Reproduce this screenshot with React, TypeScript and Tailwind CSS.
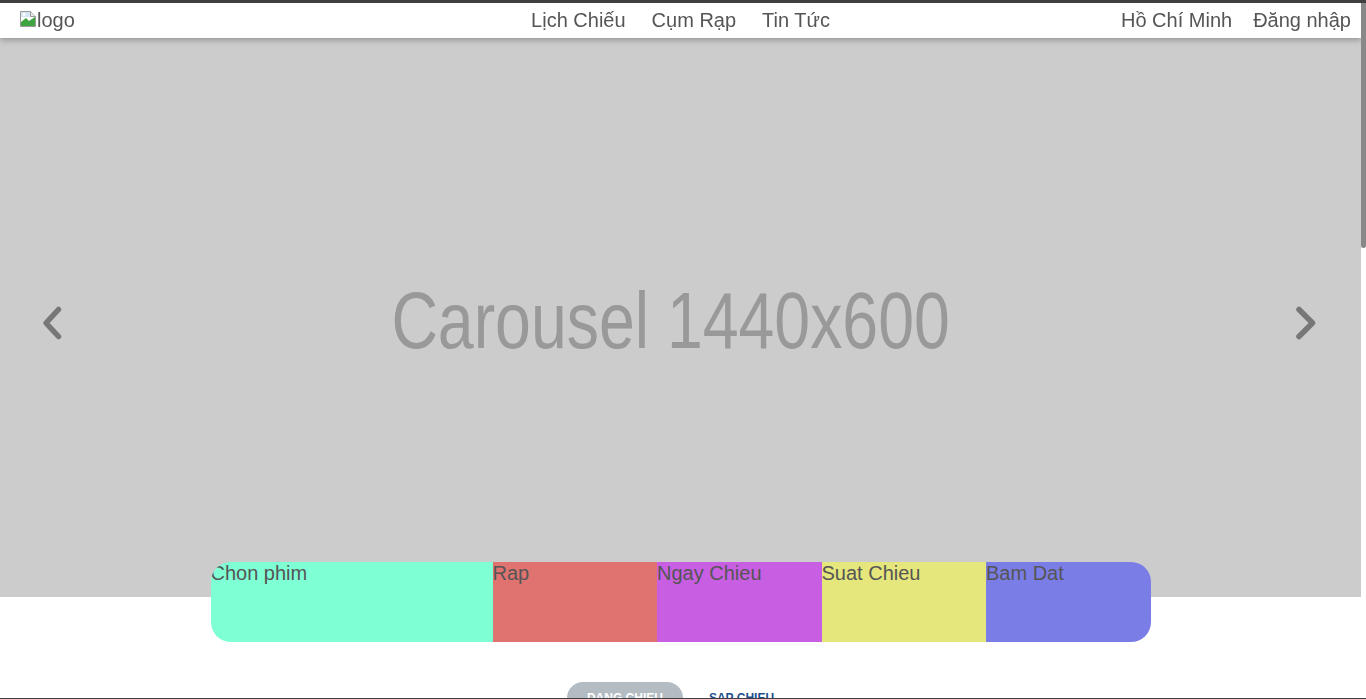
import React from "react";

const steps = [
  { label: "Chon phim", cls: "w-[30%] bg-[#7fffd4]" },
  { label: "Rap", cls: "flex-1 bg-[#e07370]" },
  { label: "Ngay Chieu", cls: "flex-1 bg-[#c85fe3]" },
  { label: "Suat Chieu", cls: "flex-1 bg-[#e5e67b]" },
  { label: "Bam Dat", cls: "flex-1 bg-[#7b7de6]" },
];

function BrokenImage() {
  return (
    <svg width="16" height="16" viewBox="0 0 16 16" className="-mt-[3px] shrink-0">
      <path d="M0.5 0.5h10l5 5v10H0.5z" fill="#fff" stroke="#999" />
      <path d="M10.5 0.5v5h5" fill="#e8e8e8" stroke="#999" />
      <path d="M1 1h9v5H1z" fill="#d6e6f5" />
      <circle cx="4" cy="3.5" r="1.4" fill="#fff" />
      <path d="M1 15V11l5-4 3 3 6-4v9z" fill="#3fa33f" />
    </svg>
  );
}

function Chevron({ dir }: { dir: "left" | "right" }) {
  const d = dir === "left" ? "M20.5 9.5L8 23l12.5 13.5" : "M9 9.5L22.5 23 9 36.5";
  return (
    <svg width="30" height="46" viewBox="0 0 30 46" fill="none">
      <path d={d} stroke="#777" strokeWidth={5.5} strokeLinecap="round" strokeLinejoin="round" />
    </svg>
  );
}

export default function App() {
  return (
    <div className="flex h-screen flex-col border-t-[3px] border-b border-[#404040] bg-white font-['Liberation_Sans',Arial,sans-serif] text-[#555]">
      <div className="flex min-h-0 flex-1">
        <div className="min-w-0 flex-1 overflow-hidden">
          {/* Header */}
          <header className="sticky top-0 z-20 grid h-[35px] grid-cols-[1fr_auto_1fr] items-center bg-white text-[20px] leading-[23px] shadow-[0_2px_6px_rgba(0,0,0,0.28)]">
            <div className="flex items-center pl-5">
              <BrokenImage />
              <span className="ml-px">logo</span>
            </div>
            <nav className="flex items-center">
              <a className="px-[13px]">Lịch Chiếu</a>
              <a className="px-[13px]">Cụm Rạp</a>
              <a className="px-[13px]">Tin Tức</a>
            </nav>
            <div className="flex items-center justify-end gap-[21px] pr-[10px]">
              <span>Hồ Chí Minh</span>
              <span>Đăng nhập</span>
            </div>
          </header>

          {/* Carousel */}
          <section className="relative flex h-[559px] items-center justify-center bg-[#ccc]">
            <span className="mt-[6px] pr-[19px] text-[79px] leading-none text-[#999]">
              <span className="inline-block scale-x-[0.815]">Carousel 1440x600</span>
            </span>
            <button className="absolute left-[38px] top-[262px]">
              <Chevron dir="left" />
            </button>
            <button className="absolute right-[41px] top-[262px]">
              <Chevron dir="right" />
            </button>
          </section>

          {/* Booking steps */}
          <div className="relative z-10 mx-auto -mt-[35px] flex h-[80px] w-[940px] overflow-hidden rounded-[20px]">
            {steps.map((s) => (
              <div key={s.label} className={`${s.cls} text-[20px] leading-[23px] text-[#555]`}>
                {s.label}
              </div>
            ))}
          </div>

          {/* Tabs */}
          <div className="mt-10 flex justify-center gap-[6px] text-[12px] font-bold leading-4">
            <button className="rounded-full bg-[#b3bcc2] px-5 py-2 text-white">DANG CHIEU</button>
            <button className="rounded-full px-5 py-2 text-[#1d4f8b]">SAP CHIEU</button>
          </div>

          {/* Movie list */}
          <div className="mx-auto mt-8 grid w-[940px] grid-cols-4 gap-5 pb-[88px]">
            {Array.from({ length: 8 }).map((_, i) => (
              <div key={i} className="flex h-[560px] flex-col gap-3">
                <div className="h-[440px] rounded-lg bg-[#ddd]" />
                <div className="text-[18px] font-bold text-[#333]">Phim {i + 1}</div>
                <div className="text-[14px] text-[#777]">120 phút</div>
              </div>
            ))}
          </div>
        </div>

        {/* Scrollbar */}
        <div className="w-[5px] shrink-0 bg-white">
          <div className="h-[245px] rounded-b-sm bg-[#888]" />
        </div>
      </div>
    </div>
  );
}
